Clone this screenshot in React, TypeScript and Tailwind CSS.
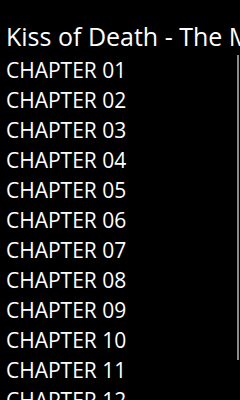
import React from 'react';

const chapters = Array.from({ length: 12 }, (_, i) => `CHAPTER ${String(i + 1).padStart(2, '0')}`);

export default function App() {
  return (
    <div className="relative w-[240px] h-[400px] overflow-hidden bg-black text-white font-['Open_Sans',sans-serif]">
      <h1 className="pl-[6px] pt-[21px] text-[25px] leading-[30px] whitespace-nowrap font-normal">
        Kiss of Death - The Mark of Death
      </h1>
      <ul className="pl-[6px] pt-[4px]">
        {chapters.map((c) => (
          <li key={c} className="h-[30px] text-[21px] leading-[30px] whitespace-nowrap">
            {c}
          </li>
        ))}
      </ul>
      <div className="absolute right-[1px] top-[55px] h-[305px] w-[2px] bg-[#8a8a8a]" />
    </div>
  );
}
